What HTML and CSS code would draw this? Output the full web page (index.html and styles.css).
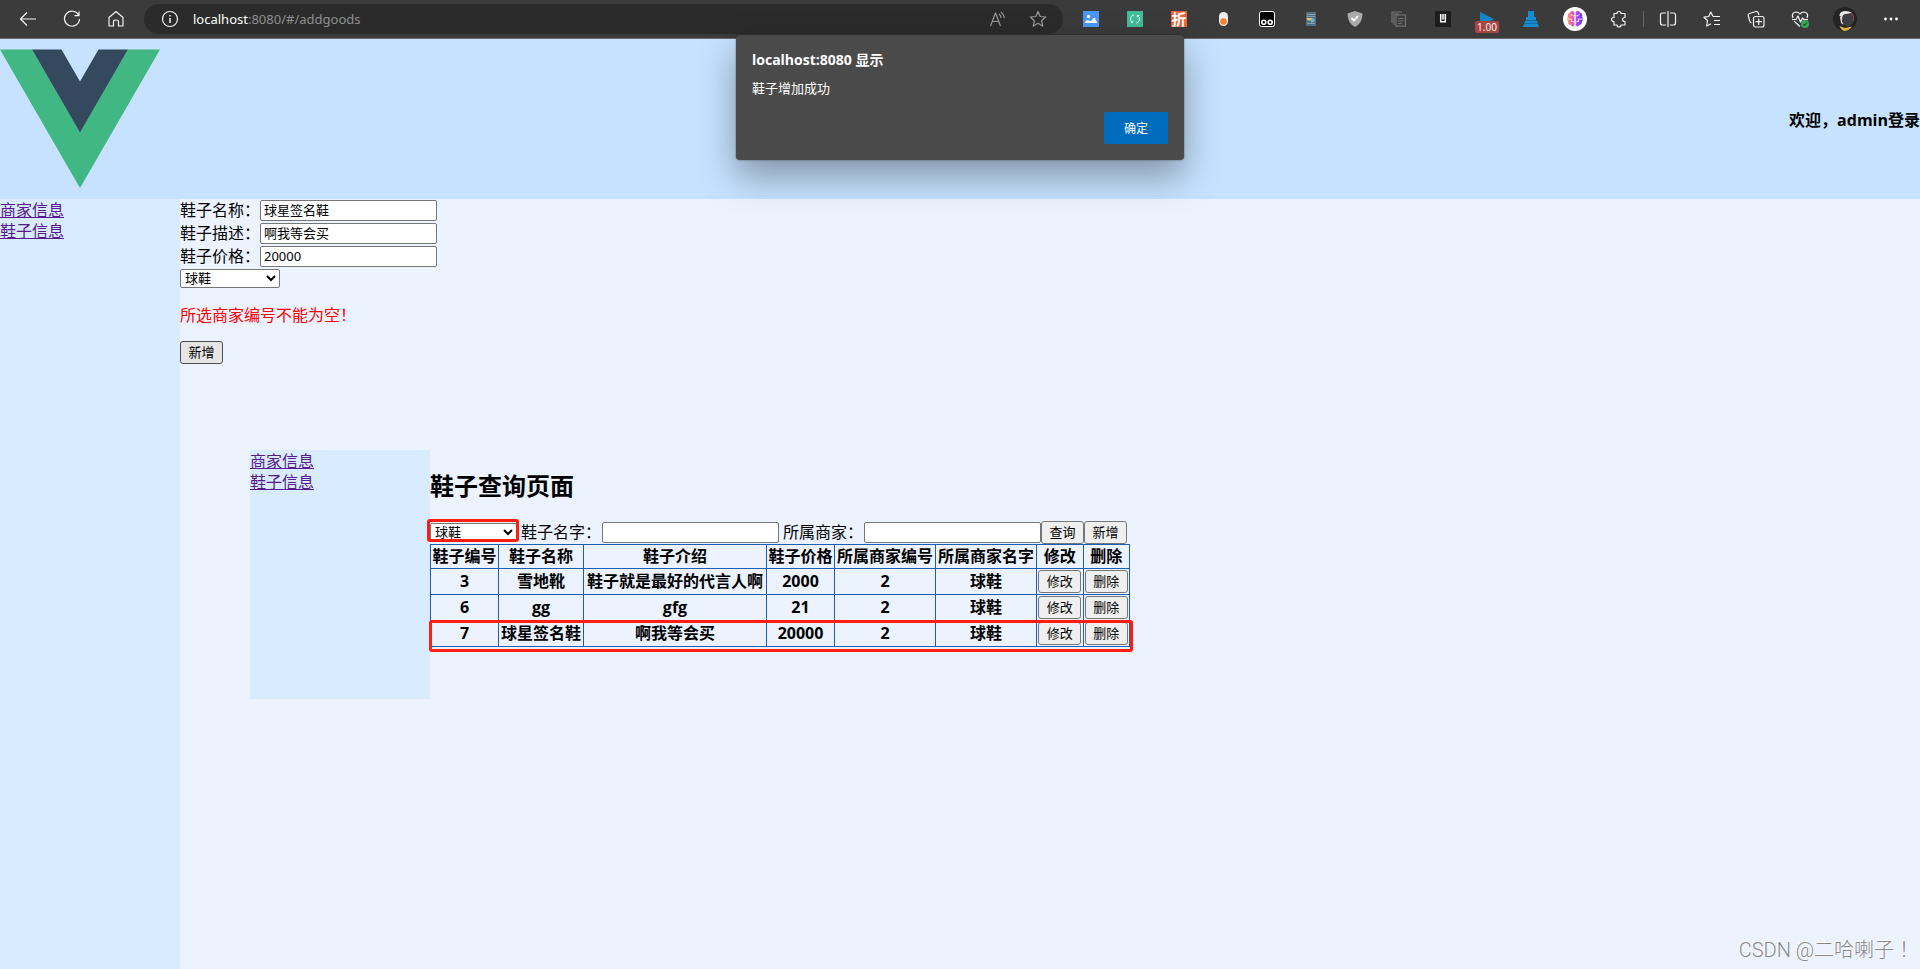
FILE: index.html
```html
<!DOCTYPE html>
<html lang="zh-CN">
<head>
<meta charset="utf-8">
<title>addgoods</title>
<link rel="stylesheet" href="styles.css">
</head>
<body>
<div class="toolbar">
  <nav class="nav-buttons">
    <button class="tool" aria-label="后退"><svg width="18" height="18" viewBox="0 0 18 18" class="line"><path d="M17 9H2M8 2.500L1.500 9L8 15.500"/></svg></button>
    <button class="tool" aria-label="刷新"><svg width="18" height="18" viewBox="0 0 18 18" class="line"><path d="M15.800 5.500A7.500 7.500 0 1 0 16.500 9M16 1.500V5.700H11.500"/></svg></button>
    <button class="tool" aria-label="主页"><svg width="18" height="18" viewBox="0 0 18 18" class="line"><path d="M2 7.500L9 1.500L16 7.500V16H11.500V11.500Q11.500 10 9 10Q6.500 10 6.500 11.500V16H2Z"/></svg></button>
  </nav>
  <div class="address">
    <svg width="18" height="18" viewBox="0 0 18 18" class="line"><circle cx="9" cy="9" r="7.500"/><path d="M9 8V13M9 5V6.500" stroke-width="1.500"/></svg>
    <div class="url"><span class="host">localhost</span>:8080/#/addgoods</div>
    <button class="tool address-tool" aria-label="朗读"><svg width="18" height="18" viewBox="0 0 18 18" class="line dim"><path d="M1.500 16L6.500 3L11.500 16M3.300 11.500H9.700M10 4Q12 5.500 12 8M12 2Q15 4.500 15.500 8"/></svg></button>
    <button class="tool address-tool" aria-label="收藏"><svg width="18" height="18" viewBox="0 0 18 18" class="line dim"><path d="M9 1.500L11.200 6.500L16.700 7L12.600 10.700L13.800 16.200L9 13.300L4.200 16.200L5.400 10.700L1.300 7L6.800 6.500Z"/></svg></button>
  </div>
  <div class="extensions">
    <button class="tool" aria-label="图片"><svg width="16" height="16" viewBox="0 0 16 16"><path fill="#4a98f5" d="M0 0H16V16H0Z"/><circle cx="5.500" cy="5.500" r="1.700" fill="#fff"/><path fill="#fff" d="M2 12V11Q3.500 8.500 6 9.500Q9 11 10 7.500Q12 6 13 9L14 12Z"/></svg></button>
    <button class="tool" aria-label="同步"><svg width="16" height="16" viewBox="0 0 16 16"><path fill="#41bd98" d="M0 0H16V16H0Z"/><g fill="none" stroke="#d7fff1" stroke-width="1"><path d="M7 3.700A4.400 4.400 0 0 0 5 11.300M9 12.300A4.400 4.400 0 0 0 11 4.700M3.700 11.500H5.700V9.700M12.300 4.500H10.300V6.300"/></g></svg></button>
    <button class="tool" aria-label="折扣"><span class="zhe">折</span></button>
    <button class="tool" aria-label="胶囊"><svg width="16" height="16" viewBox="0 0 16 16"><rect x="4" y="1" width="9" height="14" rx="4.500" fill="#eee"/><circle cx="8.500" cy="10.500" r="3.300" fill="#f58231"/></svg></button>
    <button class="tool" aria-label="脚本"><svg width="16" height="16" viewBox="0 0 16 16"><rect x=".5" y=".5" width="15" height="15" rx="2" fill="#050505" stroke="#fff"/><g fill="none" stroke="#fff" stroke-width="1.600"><circle cx="4.800" cy="11.300" r="2"/><circle cx="11.200" cy="11.300" r="2"/></g></svg></button>
    <button class="tool" aria-label="笔记"><svg width="16" height="16" viewBox="0 0 16 16"><path fill="#526f7f" d="M3 1H13V15H3Z"/><path stroke="#86a0ae" d="M4 3.500H12M4 5.500H12M4 12.500H12"/><path fill="#ebbd60" d="M4 7H9V9.500H4Z"/><path fill="#61b6e7" d="M8 8L11 7L12 10L8 12Z"/></svg></button>
    <button class="tool" aria-label="防护"><svg width="18" height="18" viewBox="0 0 18 18"><path fill="#aaa" d="M9 1L16.500 3.500Q16.500 13 9 17Q1.500 13 1.500 3.500Z"/><path fill="none" stroke="#fff" stroke-width="1.800" d="M5.500 8L8 10.500L12 6"/></svg></button>
    <button class="tool" aria-label="复制"><svg width="16" height="16" viewBox="0 0 16 16" fill="none" stroke="#747474" stroke-width="1.200"><path d="M1 12V1H11M3 14V3H8M5 4H14.500V15.200H5ZM7 7.500H12.500M7 10H12.500M7 12.500H11"/></svg></button>
    <button class="tool" aria-label="阅读"><svg width="16" height="16" viewBox="0 0 16 16"><path fill="#1d1d1d" d="M0 0H16V16H0Z"/><path fill="none" stroke="#fff" stroke-width="1.500" d="M5.700 3V10.700H10.300V3M8 3V8.500"/></svg></button>
    <button class="tool video" aria-label="视频速度"><svg width="16" height="16" viewBox="0 0 16 16"><path fill="#1285c5" d="M1 1L15 8L1 15Z"/></svg><span class="speed">1.00</span></button>
    <button class="tool" aria-label="清理"><svg width="16" height="16" viewBox="0 0 16 16"><path fill="#168bcd" d="M5 0H11V6H13V9H3V6H5ZM2 10H14L16 16H0Z"/><path stroke="#116ba8" d="M3 9.500H13M1.500 12.500H14.500"/></svg></button>
    <button class="tool" aria-label="大脑"><svg width="24" height="24" viewBox="0 0 24 24"><defs><linearGradient id="brain"><stop stop-color="#ff9b4a"/><stop offset=".45" stop-color="#dc4bd8"/><stop offset="1" stop-color="#573cff"/></linearGradient></defs><circle cx="12" cy="12" r="12" fill="#fff"/><path fill="url(#brain)" d="M11.300 5Q9 3 7 5.500Q4 6.500 5 9.500Q3 12 5 14.500Q5 17.500 7.500 18Q9.500 20.500 11.300 18.500ZM12.700 5Q15 3 17 5.500Q20 6.500 19 9.500Q21 12 19 14.500Q19 17.500 16.500 18Q14.500 20.500 12.700 18.500Z"/><path fill="none" stroke="#fff" stroke-width=".8" d="M11 9Q8 9 7.500 7M4 12H8.500V15M11 15L8 14M13 9Q16 9 16.500 7M20 12H15.500V15M13 15L16 14"/></svg></button>
    <button class="tool" aria-label="扩展"><svg width="18" height="18" viewBox="0 0 18 18" class="line"><path d="M4 3.500H7Q7 1.500 9 1.500Q11 1.500 11 3.500H15V7.500Q12.500 7.500 12.500 9.500Q12.500 11.500 15 11.500V15H11Q11 17 9 17Q7 17 7 15H4V11.500Q1.500 11.500 1.500 9.500Q1.500 7.500 4 7.500Z"/></svg></button>
    <span class="separator"></span>
    <button class="tool" aria-label="拆分屏幕"><svg width="18" height="18" viewBox="0 0 18 18" class="line"><path d="M7 3H3.500Q1.500 3 1.500 5V13Q1.500 15 3.500 15H7M11 3H14.500Q16.500 3 16.500 5V13Q16.500 15 14.500 15H11M9 1V17"/></svg></button>
    <button class="tool" aria-label="收藏夹"><svg width="18" height="18" viewBox="0 0 18 18" class="line"><path d="M10 6.500L7.800 2L5.700 6.500L1 7.200L4.500 10.500L3.700 16L8 13.800M10 6.500H17M11 10.500H17M11 14.500H17"/></svg></button>
    <button class="tool" aria-label="集锦"><svg width="18" height="18" viewBox="0 0 18 18" class="line"><path d="M4.500 13Q3 12.500 2.700 11L1.200 5.500Q1 4 2.500 3.500L9 1.500Q10.500 1.200 11.300 3L12 5"/><rect x="6.500" y="6.500" width="10.500" height="10.500" rx="2"/><path d="M11.700 8.500V15M8.500 11.700H15"/></svg></button>
    <button class="tool" aria-label="浏览器概要"><svg width="18" height="18" viewBox="0 0 18 18" class="line"><path d="M2 8Q0 2.500 5 2Q7.500 2 9 4Q10.500 2 13 2Q18 2.500 16 8M3 11L9 16.500M1 9.500H5L7 6L9.500 12L11.500 8L13 9.500H17"/><circle cx="14" cy="14" r="4" fill="#35a853" stroke="none"/><path d="M12.200 14L13.500 15.300L16 12.700" stroke="#175c2b"/></svg></button>
    <button class="tool wide" aria-label="个人资料"><svg width="24" height="24" viewBox="0 0 24 24"><circle cx="12" cy="12" r="12" fill="#242424"/><path fill="#e4e4e4" d="M6.500 9Q6 5 11 4Q16 3.500 19 6L11 7.500L9 10Z"/><path fill="#3a3f46" d="M10 8L19 7L20 16L15 20L10 17Z"/><path fill="#e5ddd4" d="M7 10L9.500 9L9 14L10.500 18L8 16Z"/><path fill="#d9b043" d="M6.500 19L12 21L19 19.500Q16 24 11 24Q8 23 6.500 19Z"/><path stroke="#b34c62" fill="none" d="M18 6L20.500 9L20 14"/></svg></button>
    <button class="tool wide" aria-label="更多"><svg width="18" height="18" viewBox="0 0 18 18" fill="#fff"><circle cx="3.500" cy="9" r="1.400"/><circle cx="9" cy="9" r="1.400"/><circle cx="14.500" cy="9" r="1.400"/></svg></button>
  </div>
</div>

<header class="header">
  <svg class="logo" width="160" height="160" viewBox="0 0 160 160"><path fill="#41b883" d="M0 10.500H32L80 93L128 10.500H160L80 149Z"/><path fill="#34495e" d="M32 10.500H61.500L80 42.500L98.500 10.500H128L80 93.500Z"/></svg>
  <strong>欢迎，admin登录</strong>
</header>

<div class="layout">
  <aside class="side">
    <a href="#/shops">商家信息</a>
    <a href="#/goods">鞋子信息</a>
  </aside>
  <main class="main">
    <form class="goods-form">
      <div class="rows">
        <div class="row"><label for="name">鞋子名称：</label><input class="field" id="name" type="text" value="球星签名鞋"></div>
        <div class="row"><label for="desc">鞋子描述：</label><input class="field" id="desc" type="text" value="啊我等会买"></div>
        <div class="row"><label for="price">鞋子价格：</label><input class="field" id="price" type="text" value="20000"></div>
      </div>
      <select class="picker shop-picker" aria-label="所属商家"><option>球鞋</option></select>
      <p class="error">所选商家编号不能为空！</p>
      <button class="btn pressed" type="button">新增</button>
    </form>

    <section class="inner">
      <aside class="side">
        <a href="#/shops">商家信息</a>
        <a href="#/goods">鞋子信息</a>
      </aside>
      <div class="query">
        <h2>鞋子查询页面</h2>
        <form class="filters">
          <span class="marked"><select class="picker" aria-label="商家"><option>球鞋</option></select></span>
          <label for="q-name">鞋子名字：</label><input class="field" id="q-name" type="text">
          <label for="q-shop">所属商家：</label><input class="field" id="q-shop" type="text">
          <button class="btn" type="button">查询</button><button class="btn" type="button">新增</button>
        </form>
        <div class="results">
          <table>
            <colgroup><col class="c-short"><col class="c-name"><col class="c-desc"><col class="c-short"><col class="c-shop"><col class="c-shop"><col class="c-act"><col class="c-act"></colgroup>
            <thead><tr><th>鞋子编号</th><th>鞋子名称</th><th>鞋子介绍</th><th>鞋子价格</th><th>所属商家编号</th><th>所属商家名字</th><th>修改</th><th>删除</th></tr></thead>
            <tbody>
              <tr><td>3</td><td>雪地靴</td><td>鞋子就是最好的代言人啊</td><td>2000</td><td>2</td><td>球鞋</td><td><button class="btn">修改</button></td><td><button class="btn">删除</button></td></tr>
              <tr><td>6</td><td>gg</td><td>gfg</td><td>21</td><td>2</td><td>球鞋</td><td><button class="btn">修改</button></td><td><button class="btn">删除</button></td></tr>
              <tr><td>7</td><td>球星签名鞋</td><td>啊我等会买</td><td>20000</td><td>2</td><td>球鞋</td><td><button class="btn">修改</button></td><td><button class="btn">删除</button></td></tr>
            </tbody>
          </table>
        </div>
      </div>
    </section>
  </main>
</div>

<div class="dialog" role="alertdialog" aria-labelledby="dialog-title">
  <div class="dialog-title" id="dialog-title">localhost:8080 显示</div>
  <div class="dialog-text">鞋子增加成功</div>
  <button class="confirm">确定</button>
</div>
<div class="watermark" lang="zh-TW">CSDN @二哈喇子！</div>
</body>
</html>
```
FILE: styles.css
```css
*, *::after { box-sizing: border-box; }

body {
  margin: 0;
  min-height: 100vh;
  display: flex;
  flex-direction: column;
  position: relative;
  font: 16px/21px "Open Sans", "Noto Sans CJK SC", sans-serif;
  color: #000;
  background: #ecf3ff;
}

button, input, select { font-family: inherit; }

/* Browser toolbar */
.toolbar {
  height: 39px;
  display: flex;
  align-items: center;
  padding: 0 6px;
  background: #3b3b3b;
  border-bottom: 1px solid #6b6b6b;
}
.nav-buttons, .extensions { display: flex; align-items: center; }
.tool {
  width: 44px;
  height: 30px;
  padding: 0;
  border: 0;
  background: none;
  display: flex;
  align-items: center;
  justify-content: center;
}
.wide { width: 46px; }
.line { fill: none; stroke: #f2f2f2; stroke-width: 1.2; stroke-linejoin: round; }
.dim { stroke: #999; }
.address {
  flex: 1;
  height: 30px;
  margin: 0 6px;
  padding: 0 5px 0 17px;
  display: flex;
  align-items: center;
  border-radius: 15px;
  background: #2b2b2b;
}
.url {
  flex: 1;
  margin-left: 14px;
  font: 13px/20px "Noto Sans", sans-serif;
  color: #8f8f8f;
}
.host { color: #fff; }
.address-tool { width: 40px; }
.zhe {
  width: 16px;
  height: 16px;
  background: #f4603a;
  color: #fff;
  font: bold 15px/16px "Noto Sans CJK SC", sans-serif;
}
.video { position: relative; }
.speed {
  position: absolute;
  left: 10px;
  top: 17px;
  width: 24px;
  height: 12px;
  border-radius: 2px;
  background: #a94442;
  color: #fff;
  font: 10px/12px "Open Sans", sans-serif;
}
.separator { width: 1px; height: 16px; margin: 0 2px; background: #666; }

/* Page */
.header {
  height: 160px;
  display: flex;
  align-items: center;
  justify-content: space-between;
  background: #c6e2ff;
}
.header strong { padding-top: 2px; }
.layout { flex: 1; display: flex; }
.side {
  width: 180px;
  flex-shrink: 0;
  display: flex;
  flex-direction: column;
  align-items: flex-start;
  padding-top: 1px;
  background: #d9ebff;
}
.side a { color: #551a8b; }
.main { flex: 1; }

.rows { display: flex; flex-direction: column; gap: 1px; }
.row { display: flex; align-items: center; height: 22px; }
.row label, .filters label { width: 80px; white-space: nowrap; }
.field {
  width: 177px;
  height: 21px;
  padding: 0 3px 1px;
  border: 1px solid #767676;
  border-radius: 2px;
  background: #fff;
  font-family: "Noto Sans", "Noto Sans CJK SC", sans-serif;
  font-size: 13px;
}
.picker {
  display: block;
  height: 19px;
  padding: 0;
  border: 1px solid #767676;
  border-radius: 2px;
  background: #fff;
  color: #000;
  font: 13px/17px "Liberation Sans", "Noto Sans CJK SC", sans-serif;
}
.shop-picker { width: 100px; margin-top: 2px; }
.error { margin: 15px 0 14px; line-height: 24px; color: #f00; }
.btn {
  display: block;
  width: 43px;
  height: 23px;
  padding: 0;
  border: 1px solid #767676;
  border-radius: 3px;
  background: #efefef;
  color: #000;
  font-size: 13px;
  line-height: 19px;
}
.pressed { background: #e5e5e5; border-color: #4f4f4f; }

.inner { display: flex; min-height: 249px; margin: 86px 0 0 70px; }
h2 { margin: 20px 0 18px; font-size: 24px; line-height: 32px; }
.filters { display: flex; align-items: center; height: 24px; }
.filters label { margin-left: 4px; }
.filters .field { margin-left: 1px; }
.marked { position: relative; }
.marked .picker { width: 87px; }
.marked::after {
  content: "";
  position: absolute;
  inset: -4px -2px 0 -3px;
  border: 3px solid #ff1d12;
  border-radius: 3px;
  pointer-events: none;
}
.results { position: relative; }
.results::after {
  content: "";
  position: absolute;
  left: -1px;
  right: -3px;
  bottom: -5px;
  height: 32px;
  border: 3px solid #ff1d12;
  border-radius: 3px;
  pointer-events: none;
}
table { width: 700px; table-layout: fixed; border-collapse: collapse; text-align: center; font-weight: bold; }
th, td { height: 26px; padding: 1px; border: 1px solid #1a5fb4; white-space: nowrap; }
th { height: 24px; padding: 0; }
td .btn { margin: 0 auto; }
.c-short { width: 68px; }
.c-name { width: 85px; }
.c-desc { width: 183px; }
.c-shop { width: 101px; }

/* Alert */
.dialog {
  position: absolute;
  top: 35px;
  left: 50%;
  width: 448px;
  margin-left: -224px;
  padding: 15px 16px 16px;
  display: flex;
  flex-direction: column;
  border-radius: 4px;
  background: #4a4a4a;
  color: #fff;
  box-shadow: 0 0 2px rgba(0, 0, 0, .5), 0 16px 36px rgba(0, 0, 0, .35);
}
.dialog-title { font-size: 14px; line-height: 20px; font-weight: bold; }
.dialog-text { margin-top: 8px; font-size: 13px; line-height: 20px; }
.confirm {
  align-self: flex-end;
  width: 64px;
  height: 32px;
  margin-top: 14px;
  border: 0;
  border-radius: 2px;
  background: #006cbe;
  color: #fff;
  font-size: 12px;
}

.watermark {
  position: absolute;
  right: 6px;
  bottom: 7px;
  font: 300 20px/24px Roboto, "Noto Sans CJK TC", sans-serif;
  color: #888;
  text-shadow: -1px -1px 0 #fff;
}
```
